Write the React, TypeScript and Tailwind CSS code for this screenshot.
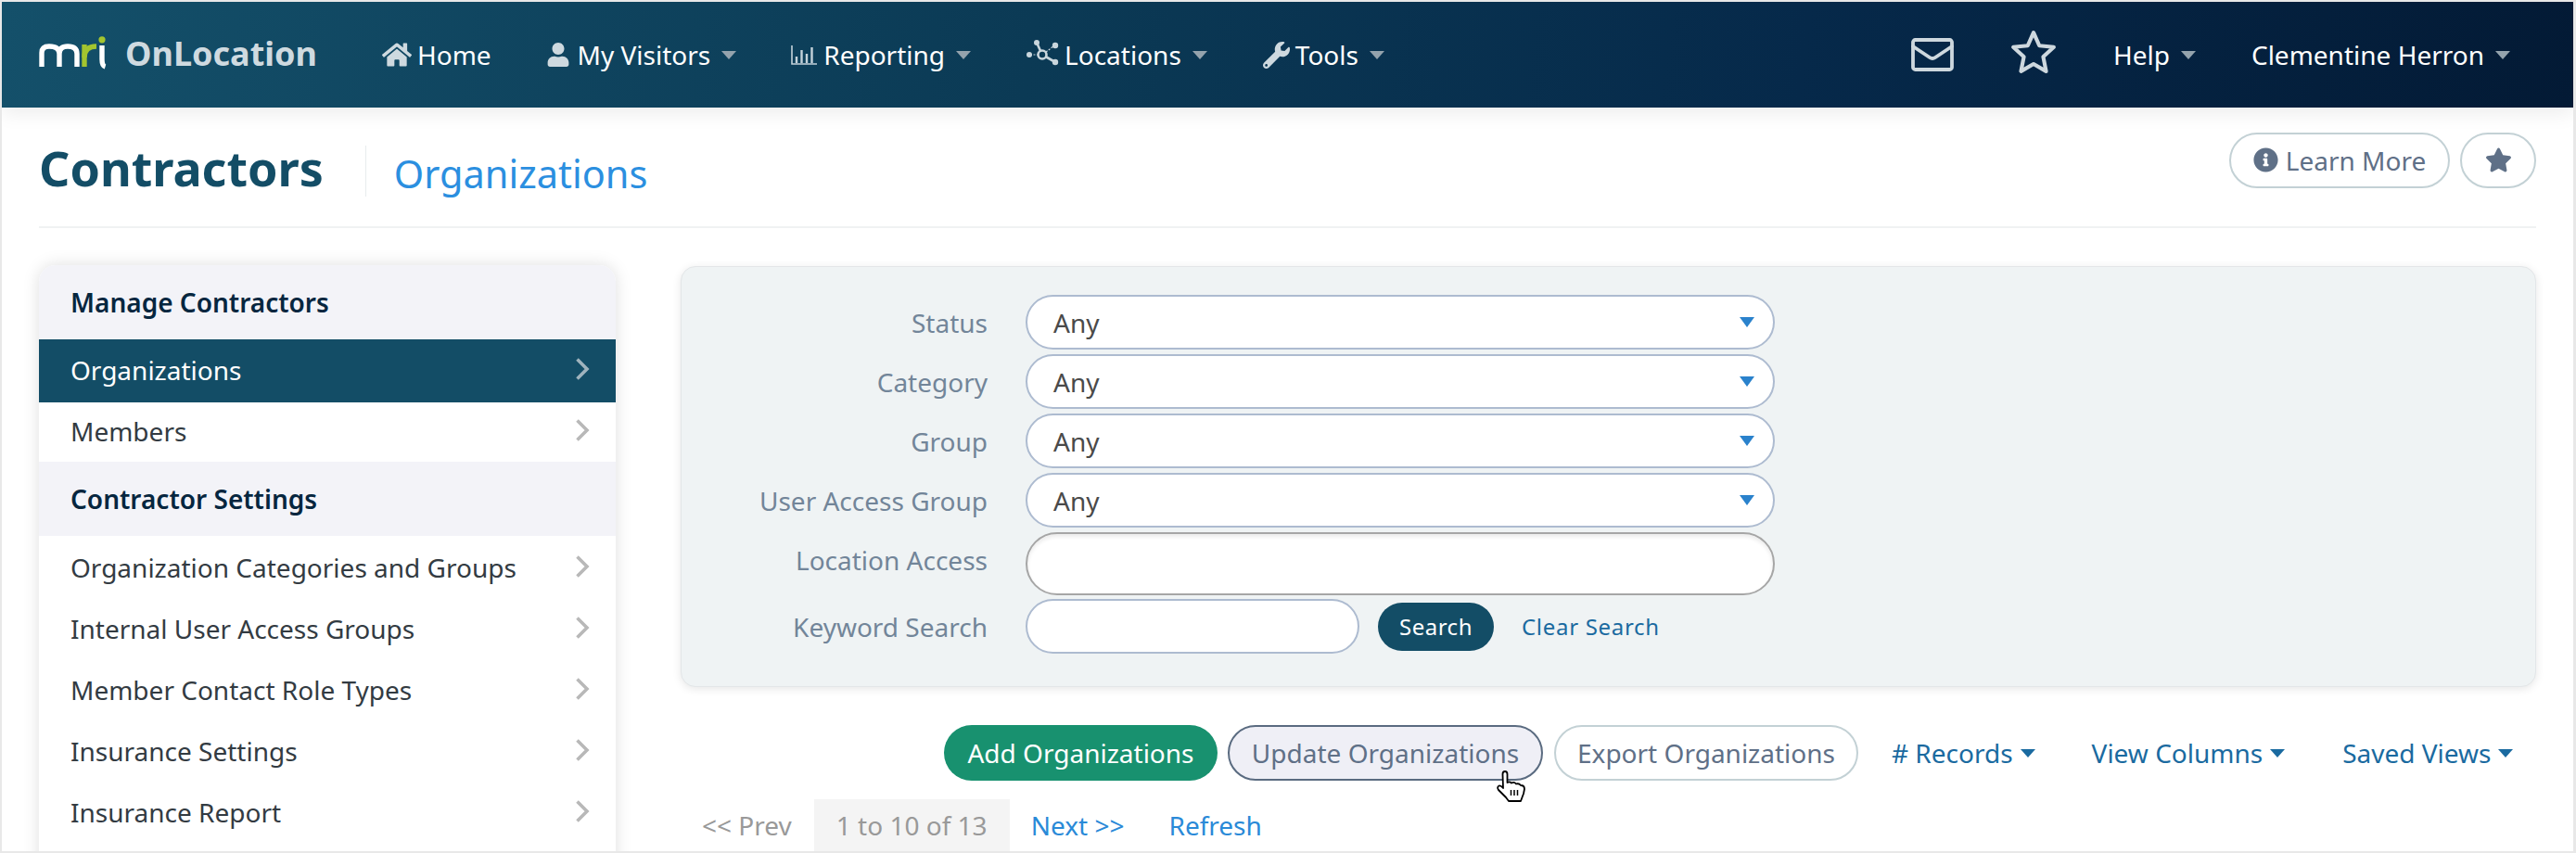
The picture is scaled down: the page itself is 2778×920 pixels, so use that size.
import { FaHome, FaUser, FaWrench, FaStar, FaInfoCircle } from 'react-icons/fa';

function Caret({ className = 'border-t-[#94a3ad]' }: { className?: string }) {
  return <span className={`inline-block h-0 w-0 border-x-[8px] border-t-[9px] border-x-transparent ${className}`} />;
}

function MriLogo() {
  return (
    <svg width="74" height="36" viewBox="0 0 74 36" fill="none" strokeWidth="5.400">
      <path d="M3 33V18Q3 11 11 11Q22 11 22 19V33M22 19Q22 11 31 11Q41 11 41 19V33" stroke="#fff" />
      <path d="M49 33V9" stroke="#a3c52f" />
      <path d="M49 23Q49 11 62 11" stroke="#a3c52f" />
      <path d="M68 10V25Q68 32 71.500 33" stroke="#fff" />
      <circle cx="68" cy="3.800" r="3.600" fill="#a3c52f" />
    </svg>
  );
}

function ChartIcon() {
  return (
    <svg width="28" height="21" viewBox="0 0 28 21" fill="none" stroke="#c4d2da" strokeWidth="1.600">
      <path d="M1 0V20H28" />
      <path strokeWidth="2.400" d="M6 19V12M11.500 19V5M17 19V9M22.500 19V2" />
    </svg>
  );
}

function NetworkIcon() {
  return (
    <svg width="36" height="30" viewBox="0 0 36 30" fill="#c9d6dd" stroke="none">
      <circle cx="3" cy="16" r="3" />
      <circle cx="11" cy="3" r="3" />
      <circle cx="31" cy="6" r="3.200" />
      <circle cx="31" cy="24" r="3.200" />
      <path d="M11 3L17 16L31 24" fill="none" stroke="#c9d6dd" strokeWidth="2.600" />
      <path d="M4 16H12M21 13L29 7" fill="none" stroke="#c9d6dd" strokeWidth="1.200" strokeDasharray="2 1.500" />
      <circle cx="17" cy="16" r="4.500" fill="#0b3a55" stroke="#c9d6dd" strokeWidth="2.600" />
    </svg>
  );
}

function MailIcon() {
  return (
    <svg width="46" height="36" viewBox="0 0 46 36" fill="none" stroke="#ced8de" strokeWidth="3.800" strokeLinejoin="round" strokeLinecap="round">
      <rect x="2" y="2" width="42" height="32" rx="2.500" />
      <path d="M2 9L20 21Q23 23 26 21L44 9" />
    </svg>
  );
}

function StarOutline() {
  return (
    <svg width="50" height="48" viewBox="0 0 48 46" fill="none" stroke="#ced8de" strokeWidth="4" strokeLinejoin="round">
      <path d="M24 3L30 16.500L45 18L34 28L37 43L24 35.500L11 43L14 28L3 18L18 16.500Z" />
    </svg>
  );
}

function SideChevron({ active }: { active: boolean }) {
  return (
    <svg width="16" height="26" viewBox="0 0 16 26" fill="none" stroke={active ? '#9fb3bd' : '#b8b8b8'} strokeWidth="3.600" className="-mt-[4px]">
      <path d="M2.500 2.500L13 13L2.500 23.500" />
    </svg>
  );
}

function HandCursor() {
  return (
    <svg className="absolute left-[1598px] top-[822px] z-20" width="60" height="45" viewBox="0 0 60 45" fill="#fff" stroke="#000" strokeWidth="1.800" strokeLinejoin="round">
      <path d="M20.500 11Q20.500 8 23 8Q25.500 8 25.500 11V20Q28 18.500 30 20.500Q33 19 35 21.500Q38 20.500 40 23Q44 23 44 27L43 32L40 40H27L24 36L16 28Q14 25 16.500 23.500Q18.500 23 21 26Z" />
      <path d="M29.500 28V34M33 28V34M36.500 28V34" fill="none" strokeWidth="1.500" />
    </svg>
  );
}

function NavLink({ label, caret = true, className = '' }: { label: string; caret?: boolean; className?: string }) {
  return (
    <span className={`flex items-center text-[28px] text-white ${className}`}>
      {label}
      {caret && <span className="ml-[12px] flex"><Caret /></span>}
    </span>
  );
}

function SideHeading({ label }: { label: string }) {
  return (
    <div className="flex h-[80px] items-center bg-[#f3f3f8] pl-[34px] text-[28px] font-semibold text-[#06263f]">{label}</div>
  );
}

function SideItem({ label, active = false, className = 'h-[66px]' }: { label: string; active?: boolean; className?: string }) {
  return (
    <div className={`flex items-center justify-between pl-[34px] pr-[28px] text-[28px] ${className} ${active ? 'bg-[#134d66] text-white' : 'text-[#333b42]'}`}>
      <span className="-mt-[2px]">{label}</span>
      <SideChevron active={active} />
    </div>
  );
}

function FilterRow({ label }: { label: string }) {
  return (
    <div className="mb-[5px] flex items-center">
      <span className="w-[330px] text-right text-[28px] text-[#728599]">{label}</span>
      <div className="ml-[41px] flex h-[59px] w-[808px] items-center justify-between rounded-[30px] border-2 border-[#adbbd0] bg-white pl-[28px] pr-[20px]">
        <span className="mt-[1px] text-[28px] text-[#4a4a4a]">Any</span>
        <Caret className="border-t-[11px] border-t-[#2a82cc]" />
      </div>
    </div>
  );
}

export default function App() {
  return (
    <div className="h-[920px] w-[2778px] overflow-hidden bg-[#e8e8e8] pb-[2px] pl-[2px] pr-[3px] pt-[2px] font-['Noto_Sans',sans-serif]">
      <div className="relative h-full overflow-hidden bg-white">
        <header className="relative z-10 flex h-[114px] items-center bg-[linear-gradient(97deg,#14506a_0%,#0b3a55_40%,#06294a_70%,#031a35_100%)] shadow-[0_6px_20px_rgba(0,0,0,0.08)]">
          <span className="ml-[40px] flex -mt-[4px]"><MriLogo /></span>
          <span className="ml-[19px] -mt-[2px] text-[36px] font-bold text-[#cfdae0]">OnLocation</span>
          <FaHome size={32} className="ml-[70px] text-[#ced9df]" />
          <NavLink label="Home" caret={false} className="ml-[6px]" />
          <FaUser size={26} className="ml-[59px] text-[#ced9df]" />
          <NavLink label="My Visitors" className="ml-[8px]" />
          <span className="ml-[59px] flex"><ChartIcon /></span>
          <NavLink label="Reporting" className="ml-[7px]" />
          <span className="ml-[60px] flex -mt-[2px]"><NetworkIcon /></span>
          <NavLink label="Locations" className="ml-[5px]" />
          <FaWrench size={29} className="ml-[60px] text-[#ced9df]" />
          <NavLink label="Tools" className="ml-[6px]" />
          <span className="ml-auto flex"><MailIcon /></span>
          <span className="ml-[61px] -mt-[6px] flex"><StarOutline /></span>
          <NavLink label="Help" className="ml-[61px]" />
          <NavLink label="Clementine Herron" className="ml-[60px] mr-[68px]" />
        </header>

        <div className="mx-[40px] flex h-[130px] items-center border-b-2 border-[#f0f2f3]">
          <h1 className="mt-[2px] text-[52px] font-bold text-[#134d66]">Contractors</h1>
          <div className="ml-[45px] mt-[9px] h-[55px] w-px bg-[#e8eced]" />
          <span className="ml-[30px] mt-[15px] text-[41.500px] text-[#2b8fe0]">Organizations</span>
          <div className="ml-auto flex items-center gap-[11px] -mt-[15px]">
            <button className="flex h-[60px] w-[238px] items-center justify-center gap-[8px] rounded-[30px] border-2 border-[#c3d1d5] text-[28px] text-[#5f7087]">
              <FaInfoCircle size={27} />
              Learn More
            </button>
            <button className="flex h-[60px] w-[82px] items-center justify-center rounded-[30px] border-2 border-[#c3d1d5] text-[#5f7087]">
              <FaStar size={29} />
            </button>
          </div>
        </div>

        <div className="flex pl-[40px] pt-[40px]">
          <aside className="h-[700px] w-[622px] overflow-hidden rounded-[18px] bg-white shadow-[0_0_18px_rgba(0,0,0,0.13)]">
            <SideHeading label="Manage Contractors" />
            <SideItem label="Organizations" active className="h-[68px]" />
            <SideItem label="Members" className="h-[64px]" />
            <SideHeading label="Contractor Settings" />
            <div className="h-[2px]" />
            <SideItem label="Organization Categories and Groups" />
            <SideItem label="Internal User Access Groups" />
            <SideItem label="Member Contact Role Types" />
            <SideItem label="Insurance Settings" />
            <SideItem label="Insurance Report" />
          </aside>

          <main className="ml-[70px] w-[2001px]">
            <section className="mt-[1px] h-[454px] rounded-[16px] border border-[#e3e6e8] bg-[#eff3f4] pt-[30px] shadow-[0_2px_10px_rgba(0,0,0,0.1)]">
              <FilterRow label="Status" />
              <FilterRow label="Category" />
              <FilterRow label="Group" />
              <FilterRow label="User Access Group" />
              <div className="mb-[4px] flex">
                <span className="mt-[9px] w-[330px] text-right text-[28px] text-[#728599]">Location Access</span>
                <div className="ml-[41px] h-[68px] w-[808px] rounded-[34px] border-2 border-[#a6a6a6] bg-white shadow-[inset_0_3px_4px_rgba(0,0,0,0.08)]" />
              </div>
              <div className="flex items-center">
                <span className="w-[330px] text-right text-[28px] text-[#728599]">Keyword Search</span>
                <div className="ml-[41px] h-[59px] w-[360px] rounded-[30px] border-2 border-[#adbbd0] bg-white" />
                <button className="ml-[20px] flex h-[52px] w-[125px] items-center justify-center rounded-[26px] bg-[#134d66] text-[24px] text-white tracking-[0.5px]">Search</button>
                <a className="ml-[30px] text-[24px] tracking-[0.7px] text-[#1a6aa0]">Clear Search</a>
              </div>
            </section>

            <div className="ml-[284px] mt-[41px] flex h-[60px] items-center text-[28px]">
              <button className="flex h-[60px] w-[295px] items-center justify-center rounded-[30px] bg-[#18916f] text-white">Add Organizations</button>
              <button className="ml-[11px] flex h-[60px] w-[340px] items-center justify-center rounded-[30px] border-2 border-[#5a6b80] bg-[#efeff6] text-[#5f7087]">Update Organizations</button>
              <button className="ml-[12px] flex h-[60px] w-[328px] items-center justify-center rounded-[30px] border-2 border-[#c3d1d5] text-[#5f7087]">Export Organizations</button>
              <span className="ml-[36px] flex items-center gap-[8px] text-[#1a6aa0]"># Records<Caret className="border-t-[#1a6aa0]" /></span>
              <span className="ml-[61px] flex items-center gap-[8px] text-[#1a6aa0]">View Columns<Caret className="border-t-[#1a6aa0]" /></span>
              <span className="ml-[62px] flex items-center gap-[8px] text-[#1a6aa0]">Saved Views<Caret className="border-t-[#1a6aa0]" /></span>
            </div>

            <div className="mt-[20px] flex h-[56px] items-center text-[28px]">
              <span className="ml-[23px] text-[#999]">&lt;&lt; Prev</span>
              <span className="ml-[24px] flex h-[56px] w-[211px] items-center justify-center bg-[#f4f4f4] text-[#999]">1 to 10 of 13</span>
              <a className="ml-[23px] text-[#2a8ad8]">Next &gt;&gt;</a>
              <a className="ml-[48px] text-[#2a8ad8]">Refresh</a>
            </div>
          </main>
        </div>

        <HandCursor />
      </div>
    </div>
  );
}
